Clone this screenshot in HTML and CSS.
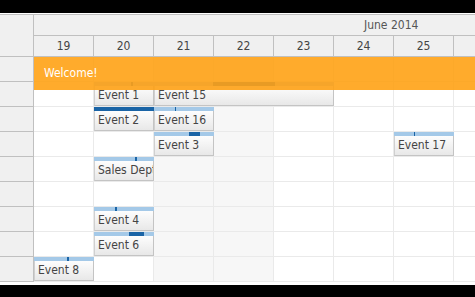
FILE: index.html
```html
<!DOCTYPE html>
<html>
<head>
<meta charset="utf-8">
<link rel="stylesheet" href="styles.css">
</head>
<body>
<div class="frame">
  <div class="sched">
    <div class="hdr">
      <div class="corner"></div>
      <div class="timehdr">
        <div class="month"><span>June 2014</span></div>
        <div class="days">
          <div class="day">19</div><div class="day">20</div><div class="day">21</div><div class="day">22</div><div class="day">23</div><div class="day">24</div><div class="day">25</div><div class="day"></div>
        </div>
      </div>
    </div>
    <div class="rows">
      <div class="msg">Welcome!</div>

      <div class="row"><div class="rh"></div><div class="cells"></div></div>

      <div class="row"><div class="rh"></div><div class="cells">
        <div class="ev" style="grid-column:2 / span 1"><div class="bar"><div class="dur" style="margin-left:37px;width:2px"></div></div><div class="txt">Event 1</div></div>
        <div class="ev" style="grid-column:3 / span 3"><div class="bar"><div class="dur" style="margin-left:59px;width:62px"></div></div><div class="txt">Event 15</div></div>
      </div></div>

      <div class="row"><div class="rh"></div><div class="cells">
        <div class="ev" style="grid-column:2 / span 1"><div class="bar"><div class="dur" style="margin-left:0;width:60px"></div></div><div class="txt">Event 2</div></div>
        <div class="ev" style="grid-column:3 / span 1"><div class="bar"><div class="dur" style="margin-left:21px;width:1px"></div></div><div class="txt">Event 16</div></div>
      </div></div>

      <div class="row"><div class="rh"></div><div class="cells">
        <div class="ev" style="grid-column:3 / span 1"><div class="bar"><div class="dur" style="margin-left:35px;width:11px"></div></div><div class="txt">Event 3</div></div>
        <div class="ev" style="grid-column:7 / span 1"><div class="bar"><div class="dur" style="margin-left:20px;width:1px"></div></div><div class="txt">Event 17</div></div>
      </div></div>

      <div class="row"><div class="rh"></div><div class="cells">
        <div class="ev" style="grid-column:2 / span 1"><div class="bar"><div class="dur" style="margin-left:41px;width:2px"></div></div><div class="txt">Sales Dept</div></div>
      </div></div>

      <div class="row"><div class="rh"></div><div class="cells"></div></div>

      <div class="row"><div class="rh"></div><div class="cells">
        <div class="ev" style="grid-column:2 / span 1"><div class="bar"><div class="dur" style="margin-left:21px;width:2px"></div></div><div class="txt">Event 4</div></div>
      </div></div>

      <div class="row"><div class="rh"></div><div class="cells">
        <div class="ev" style="grid-column:2 / span 1"><div class="bar"><div class="dur" style="margin-left:35px;width:15px"></div></div><div class="txt">Event 6</div></div>
      </div></div>

      <div class="row"><div class="rh"></div><div class="cells">
        <div class="ev" style="grid-column:1 / span 1"><div class="bar"><div class="dur" style="margin-left:33px;width:2px"></div></div><div class="txt">Event 8</div></div>
      </div></div>
    </div>
  </div>
</div>
</body>
</html>
```
FILE: styles.css
```css
html, body {
  margin: 0;
  padding: 0;
  background: #000;
}
body {
  padding-top: 13px;
  font-family: "DejaVu Sans Condensed", "DejaVu Sans", sans-serif;
  font-stretch: condensed;
  font-size: 12px;
  color: #444;
}
.frame {
  width: 475px;
  height: 272px;
  box-sizing: border-box;
  padding-top: 1px;
  background: #fff;
  overflow: hidden;
}
.sched {
  width: 600px;
  border-top: 1px solid #c0c0c0;
}
.hdr {
  display: flex;
  background: #f0f0f0;
}
.corner {
  width: 33px;
  height: 41px;
  border-right: 1px solid #c0c0c0;
  border-bottom: 1px solid #c0c0c0;
}
.timehdr {
  flex: 1;
  display: flex;
  flex-direction: column;
}
.month {
  height: 20px;
  line-height: 20px;
  border-bottom: 1px solid #c0c0c0;
  padding-left: 330px;
  color: #555;
  white-space: nowrap;
}
.days {
  display: flex;
  border-bottom: 1px solid #c0c0c0;
}
.day {
  flex: none;
  width: 59px;
  height: 20px;
  line-height: 20px;
  text-align: center;
  border-right: 1px solid #c0c0c0;
  color: #444;
}
.rows {
  position: relative;
}
.msg {
  position: absolute;
  left: 34px;
  top: 0;
  width: 441px;
  height: 33px;
  box-sizing: border-box;
  padding-left: 10px;
  line-height: 33px;
  background: #ffa216;
  opacity: 0.9;
  color: #fff;
  z-index: 2;
}
.row {
  display: flex;
}
.rh {
  flex: none;
  width: 33px;
  height: 24px;
  background: #f0f0f0;
  border-right: 1px solid #c0c0c0;
  border-bottom: 1px solid #c0c0c0;
}
.cells {
  flex: none;
  display: grid;
  grid-template-columns: repeat(8, 60px);
  grid-template-rows: 24px;
  border-bottom: 1px solid #eaeaea;
  background:
    repeating-linear-gradient(to right, transparent 0 59px, #eaeaea 59px 60px),
    linear-gradient(to right, #fff 0 120px, #f7f7f7 120px 240px, #fff 240px);
}
.ev {
  grid-row: 1;
  display: flex;
  flex-direction: column;
  min-width: 0;
  overflow: hidden;
}
.bar {
  height: 4px;
  background: #a4c9e8;
  display: flex;
}
.dur {
  height: 4px;
  background: #1a64a6;
  flex: none;
}
.txt {
  flex: 1;
  background: linear-gradient(to bottom, #fdfdfd, #e8e8e8);
  border: 1px solid #d0d0d0;
  border-top: 0;
  border-right-color: #c4c4c4;
  border-bottom-color: #c4c4c4;
  padding-left: 3px;
  line-height: 18px;
  white-space: nowrap;
  overflow: hidden;
  color: #444;
}
```
